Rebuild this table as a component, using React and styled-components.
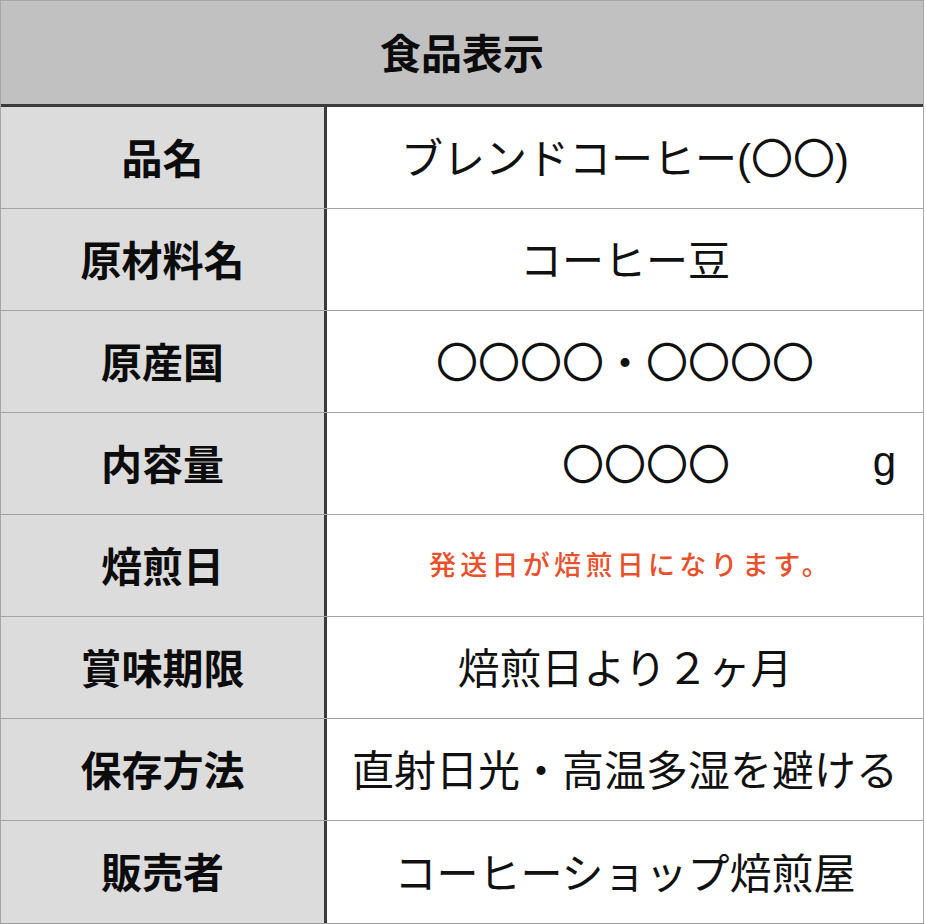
import React from "react"
import styled, { createGlobalStyle } from "styled-components"

const GlobalStyle = createGlobalStyle`
  html, body {
    margin: 0;
    padding: 0;
    background: #fff;
  }
  body {
    font-family: "Liberation Sans", "Noto Sans CJK JP", sans-serif;
    color: #111;
  }
`

const Table = styled.div`
  width: 924px;
  border: 1px solid #a6a6a6;
  border-bottom-color: #9c9c9c;
  box-sizing: border-box;
  background: #fff;
`

const Header = styled.div`
  height: 106px;
  display: flex;
  align-items: center;
  justify-content: center;
  padding-bottom: 4px;
  box-sizing: border-box;
  background-color: #c0c1c0;
  border-bottom: 3px solid #3b3b3b;
  font-family: "Noto Sans CJK JP", sans-serif;
  font-weight: 700;
  font-size: 41px;
  color: #0c0c0c;
`

const Row = styled.div`
  display: grid;
  grid-template-columns: 326px 1fr;
  height: 102px;
  box-sizing: border-box;
  border-bottom: ${p => (p.$last ? "none" : "1px solid #a3a3a3")};
`

const Label = styled.div`
  display: flex;
  align-items: center;
  justify-content: center;
  padding-bottom: 4px;
  background-color: #dcdcdc;
  border-right: 3px solid #3b3b3b;
  font-family: "Noto Sans CJK JP", sans-serif;
  font-weight: 700;
  font-size: 41px;
  color: #0c0c0c;
`

const Value = styled.div`
  display: flex;
  align-items: center;
  justify-content: center;
  padding-bottom: 4px;
  font-size: 42px;
  font-weight: 400;
  color: #111;
  white-space: nowrap;
`

const MeasureValue = styled(Value)`
  justify-content: flex-start;
  padding-left: 235px;
  padding-right: 27px;
`

const Unit = styled.span`
  margin-left: auto;
`

const Notice = styled.span`
  font-family: "Noto Sans CJK JP", sans-serif;
  font-size: 27px;
  font-weight: 500;
  letter-spacing: 4.3px;
  color: #e9502c;
  padding-left: 12px;
`

const rows = [
  { label: "品名", value: "ブレンドコーヒー(〇〇)" },
  { label: "原材料名", value: "コーヒー豆" },
  { label: "原産国", value: "〇〇〇〇・〇〇〇〇" },
  { label: "内容量", measure: "〇〇〇〇", unit: "g" },
  { label: "焙煎日", notice: "発送日が焙煎日になります。" },
  { label: "賞味期限", value: "焙煎日より２ヶ月" },
  { label: "保存方法", value: "直射日光・高温多湿を避ける" },
  { label: "販売者", value: "コーヒーショップ焙煎屋" },
]

export default function App() {
  return (
    <>
      <GlobalStyle />
      <Table>
        <Header>食品表示</Header>
        {rows.map((r, i) => (
          <Row key={r.label} $last={i === rows.length - 1}>
            <Label>{r.label}</Label>
            {r.measure ? (
              <MeasureValue>
                <span>{r.measure}</span>
                <Unit>{r.unit}</Unit>
              </MeasureValue>
            ) : r.notice ? (
              <Value>
                <Notice>{r.notice}</Notice>
              </Value>
            ) : (
              <Value>{r.value}</Value>
            )}
          </Row>
        ))}
      </Table>
    </>
  )
}
